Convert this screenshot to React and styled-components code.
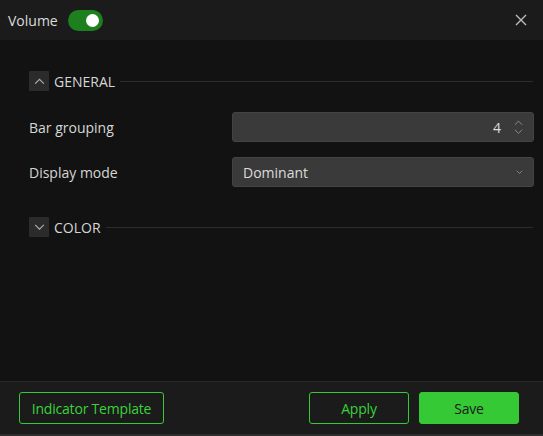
import React, { useState } from "react"
import styled, { createGlobalStyle } from "styled-components"

const GlobalStyle = createGlobalStyle`
  html, body {
    margin: 0;
    padding: 0;
    background: #121212;
  }

  body {
    font-family: "Open Sans", "Noto Sans", sans-serif;
    font-size: 14px;
    color: #d6d6d6;
  }

  * {
    box-sizing: border-box;
  }
`

const Dialog = styled.div`
  width: 543px;
  height: 436px;
  display: flex;
  flex-direction: column;
  background: #121212;
`

const Header = styled.header`
  height: 40px;
  flex: none;
  display: flex;
  align-items: center;
  padding: 0 15px 0 8px;
  background: #1b1b1b;
`

const Title = styled.span`
  font-size: 14px;
  color: #dcdcdc;
`

const Toggle = styled.button`
  width: 35px;
  height: 21px;
  margin-left: 10px;
  padding: 0;
  border: none;
  border-radius: 11px;
  background: ${(p) => (p.$on ? "#1d7f1d" : "#444")};
  position: relative;
  cursor: pointer;

  &::after {
    content: "";
    position: absolute;
    top: 4px;
    left: ${(p) => (p.$on ? "18px" : "4px")};
    width: 13px;
    height: 13px;
    border-radius: 50%;
    background: #fff;
  }
`

const CloseButton = styled.button`
  margin-left: auto;
  width: 14px;
  height: 14px;
  padding: 0;
  border: none;
  background: none;
  display: flex;
  align-items: center;
  justify-content: center;
  cursor: pointer;
`

const Body = styled.main`
  flex: 1;
  padding: 31px 10px 0 29px;
  display: flex;
  flex-direction: column;
`

const Section = styled.section`
  display: flex;
  flex-direction: column;
  margin-bottom: 30px;
`

const SectionHead = styled.div`
  display: flex;
  align-items: center;
  height: 20px;
`

const Chevron = styled.button`
  width: 20px;
  height: 20px;
  padding: 0;
  border: none;
  border-radius: 1px;
  background: #2b2b2b;
  display: flex;
  align-items: center;
  justify-content: center;
  cursor: pointer;
`

const SectionTitle = styled.span`
  margin-left: 5px;
  font-size: 14px;
  color: #d6d6d6;
`

const Rule = styled.div`
  flex: 1;
  height: 1px;
  margin-left: 5px;
  background: #2c2c2c;
`

const Rows = styled.div`
  display: grid;
  grid-template-columns: 203px 302px;
  row-gap: 15px;
  margin-top: 21px;
  align-items: center;
`

const Label = styled.label`
  font-size: 14px;
  color: #d6d6d6;
`

const Field = styled.div`
  height: 30px;
  display: flex;
  align-items: center;
  padding: 0 10px;
  border: 1px solid #444;
  border-radius: 3px;
  background: #3a3a3a;
  color: #dcdcdc;
  font-size: 14px;
`

const NumberValue = styled.span`
  margin-left: auto;
  margin-right: 13px;
`

const Spinner = styled.div`
  display: flex;
  flex-direction: column;
  gap: 3px;
`

const SelectValue = styled.span`
  flex: 1;
`

const Footer = styled.footer`
  height: 55px;
  flex: none;
  display: flex;
  align-items: center;
  gap: 10px;
  padding: 0 24px 0 19px;
  background: #1b1b1b;
  border-top: 1px solid #2a2a2a;
  border-bottom: 2px solid #2e2e2e;
`

const Button = styled.button`
  height: 32px;
  min-width: ${(p) => p.$width || "100px"};
  padding: 0 10px;
  border-radius: 3px;
  border: 1px solid #35c935;
  background: ${(p) => (p.$primary ? "#35c935" : "transparent")};
  color: ${(p) => (p.$primary ? "#1a1a1a" : "#3ad23a")};
  font-family: "Open Sans", "Noto Sans", sans-serif;
  font-size: 14px;
  letter-spacing: -0.2px;
  cursor: pointer;
`

const Spacer = styled.div`
  flex: 1;
`

const ChevronIcon = ({ up, size = 11, color = "#aaa" }) => (
  <svg width={size} height={size / 2 + 1} viewBox="0 0 10 6" fill="none">
    <path
      d={up ? "M1 5.2 L5 1.2 L9 5.2" : "M1 0.8 L5 4.8 L9 0.8"}
      stroke={color}
      strokeWidth="1.1"
    />
  </svg>
)

const App = () => {
  const [on, setOn] = useState(true)
  const [general, setGeneral] = useState(true)
  const [color, setColor] = useState(false)

  return (
    <>
      <GlobalStyle />
      <Dialog>
        <Header>
          <Title>Volume</Title>
          <Toggle $on={on} onClick={() => setOn(!on)} />
          <CloseButton>
            <svg width="12" height="12" viewBox="0 0 12 12">
              <path d="M1 1 L11 11 M11 1 L1 11" stroke="#bdbdbd" strokeWidth="1.4" />
            </svg>
          </CloseButton>
        </Header>

        <Body>
          <Section>
            <SectionHead>
              <Chevron onClick={() => setGeneral(!general)}>
                <ChevronIcon up={general} />
              </Chevron>
              <SectionTitle>GENERAL</SectionTitle>
              <Rule />
            </SectionHead>
            {general && (
              <Rows>
                <Label>Bar grouping</Label>
                <Field>
                  <NumberValue>4</NumberValue>
                  <Spinner>
                    <ChevronIcon up size={9} color="#8a8a8a" />
                    <ChevronIcon size={9} color="#8a8a8a" />
                  </Spinner>
                </Field>
                <Label>Display mode</Label>
                <Field>
                  <SelectValue>Dominant</SelectValue>
                  <ChevronIcon size={7} color="#9a9a9a" />
                </Field>
              </Rows>
            )}
          </Section>

          <Section>
            <SectionHead>
              <Chevron onClick={() => setColor(!color)}>
                <ChevronIcon up={color} />
              </Chevron>
              <SectionTitle>COLOR</SectionTitle>
              <Rule />
            </SectionHead>
          </Section>
        </Body>

        <Footer>
          <Button $width="145px">Indicator Template</Button>
          <Spacer />
          <Button>Apply</Button>
          <Button $primary>Save</Button>
        </Footer>
      </Dialog>
    </>
  )
}

export default App
